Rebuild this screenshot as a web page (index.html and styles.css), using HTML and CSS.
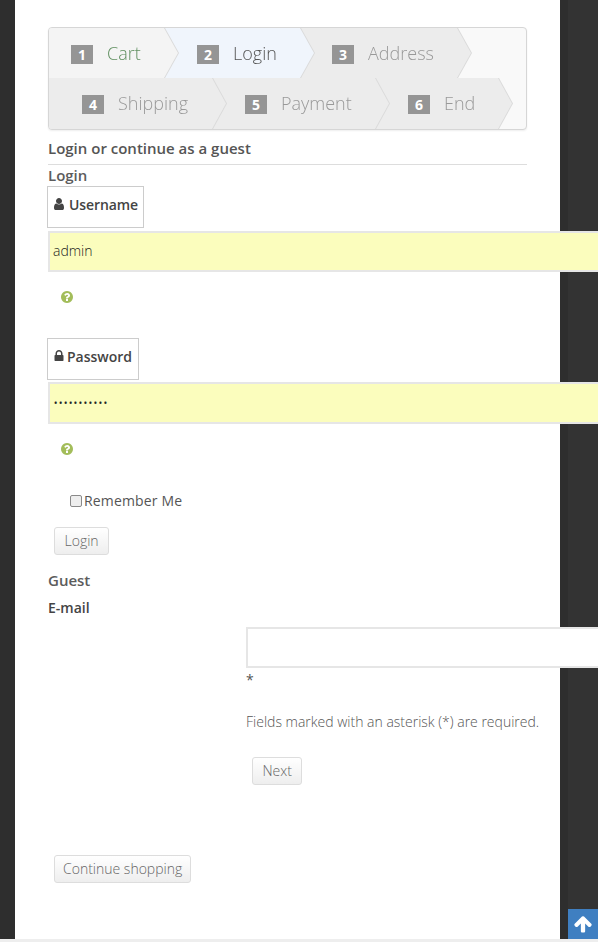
FILE: index.html
```html
<!DOCTYPE html>
<html>
<head>
<meta charset="UTF-8">
<title>Login</title>
<link rel="stylesheet" href="styles.css">
</head>
<body>
<div class="page">

<div class="steps">
<div class="row">
<div class="step s1"><span class="num">1</span><span class="name">Cart</span></div>
<div class="step s2"><span class="num">2</span><span class="name">Login</span></div>
<div class="step s3"><span class="num">3</span><span class="name">Address</span></div>
</div>
<div class="row">
<div class="step s4"><span class="num">4</span><span class="name">Shipping</span></div>
<div class="step s5"><span class="num">5</span><span class="name">Payment</span></div>
<div class="step s6"><span class="num">6</span><span class="name">End</span></div>
</div>
</div>

<h2 class="title">Login or continue as a guest</h2>
<h3 class="sub">Login</h3>

<div class="addon user-addon">
<svg class="ico" viewBox="0 0 1792 1792"><path d="M1536 1399q0 109-62.5 187t-150.5 78h-854q-88 0-150.5-78t-62.5-187q0-85 8.5-160.5t31.5-152 58.5-131 94-89 134.5-34.5q131 128 313 128t313-128q76 0 134.5 34.5t94 89 58.5 131 31.5 152 8.5 160.5zm-256-887q0 159-112.5 271.5t-271.5 112.5-271.5-112.5-112.5-271.5 112.5-271.5 271.5-112.5 271.5 112.5 112.5 271.5z"/></svg>
Username
</div>
<input class="field filled" type="text" value="admin">
<div class="help"><svg viewBox="0 0 1792 1792"><path d="M1024 1376v-192q0-14-9-23t-23-9h-192q-14 0-23 9t-9 23v192q0 14 9 23t23 9h192q14 0 23-9t9-23zm256-672q0-88-55.5-163t-138.5-116-170-41q-243 0-371 213-15 24 8 42l132 100q7 6 19 6 16 0 25-12 53-68 86-92 34-24 86-24 48 0 85.5 26t37.5 59q0 38-20 61t-68 45q-63 28-115.5 86.5t-52.5 125.5v36q0 14 9 23t23 9h192q14 0 23-9t9-23q0-19 21.5-49.5t54.5-49.5q32-18 49-28.5t46-35 44.5-48 28-60.5 12.5-81zm384 192q0 209-103 385.5t-279.5 279.5-385.5 103-385.5-103-279.5-279.5-103-385.5 103-385.5 279.5-279.5 385.5-103 385.5 103 279.5 279.5 103 385.5z"/></svg></div>

<div class="addon pass-addon">
<svg class="ico" viewBox="0 0 1792 1792"><path d="M640 768h512v-192q0-106-75-181t-181-75-181 75-75 181v192zm832 96v576q0 40-28 68t-68 28h-960q-40 0-68-28t-28-68v-576q0-40 28-68t68-28h32v-192q0-184 132-316t316-132 316 132 132 316v192h32q40 0 68 28t28 68z"/></svg>
Password
</div>
<input class="field filled pass-field" type="password" value="admin12345a">
<div class="help"><svg viewBox="0 0 1792 1792"><path d="M1024 1376v-192q0-14-9-23t-23-9h-192q-14 0-23 9t-9 23v192q0 14 9 23t23 9h192q14 0 23-9t9-23zm256-672q0-88-55.5-163t-138.5-116-170-41q-243 0-371 213-15 24 8 42l132 100q7 6 19 6 16 0 25-12 53-68 86-92 34-24 86-24 48 0 85.5 26t37.5 59q0 38-20 61t-68 45q-63 28-115.5 86.5t-52.5 125.5v36q0 14 9 23t23 9h192q14 0 23-9t9-23q0-19 21.5-49.5t54.5-49.5q32-18 49-28.5t46-35 44.5-48 28-60.5 12.5-81zm384 192q0 209-103 385.5t-279.5 279.5-385.5 103-385.5-103-279.5-279.5-103-385.5 103-385.5 279.5-279.5 385.5-103 385.5 103 279.5 279.5 103 385.5z"/></svg></div>

<label class="remember"><span class="box"></span>Remember Me</label>
<button class="btn login-btn">Login</button>

<h3 class="sub guest">Guest</h3>
<div class="email-label">E-mail</div>

<div class="guest-form">
<input class="field plain" type="text">
<div class="star">*</div>
<p class="req">Fields marked with an asterisk (*) are required.</p>
<button class="btn next-btn">Next</button>
</div>

<button class="btn cont-btn">Continue shopping</button>

</div>

<a class="totop"><svg viewBox="0 0 1792 1792"><path d="M1675 971q0 51-37 90l-75 75q-38 38-91 38-54 0-90-38l-294-293v704q0 52-37.5 84.5t-90.5 32.5h-128q-53 0-90.5-32.5t-37.5-84.5v-704l-294 293q-36 38-90 38t-90-38l-75-75q-38-38-38-90 0-53 38-91l651-651q35-37 90-37 54 0 91 37l651 651q37 39 37 91z"/></svg></a>
<div class="bottom"></div>
</body>
</html>
```

FILE: styles.css
```css
*{
box-sizing: border-box;
margin:0; padding:0;
}

html,body{
height: 100%;
overflow: hidden;
}

body{
background: #333;
font: 14px "Open Sans", sans-serif;
color: #555;
}

.page{
width: 560px;
height: 939px;
background: #fff;
border-left: 15px solid #2e2e2e;
padding: 27px 0 0 33px;
box-shadow: 8px 0 0 #2e2e2e;
}

/* steps */
.steps{
width: 479px;
height: 103px;
background: #f9f9f9;
border: 1px solid #d6d6d6;
border-radius: 4px;
overflow: hidden;
box-shadow: 0 1px 2px #eee;
}

.row{
display: flex;
height: 50px;
}

.row + .row{
height: 51px;
}

.step{
position: relative;
height: 100%;
display: flex;
align-items: center;
filter: drop-shadow(1px 0 0 #d9d9d9);
margin-right: -14px;
font-weight: 300;
font-size: 18px;
color: #999;
}

.row + .row .step{
padding-bottom: 1px;
}

.step::before{
content: "";
position: absolute;
inset: 0;
background: #ececec;
clip-path: polygon(0 0, calc(100% - 14px) 0, 100% 50%, calc(100% - 14px) 100%, 0 100%);
}

.step>span{
position: relative;
}

.s1{ width: 129px; z-index: 6; padding-left: 22px; }
.s2{ width: 150px; z-index: 5; padding-left: 33px; }
.s3{ width: 171px; z-index: 4; padding-left: 32px; }
.s4{ width: 177px; z-index: 3; padding-left: 33px; }
.s5{ width: 177px; z-index: 2; padding-left: 33px; }
.s6{ width: 137px; z-index: 1; padding-left: 33px; }

.s1::before{ background: #f4f4f4; }
.s2::before{ background: #f0f5fc; }

.s1 .name{ color: #5f8f5f; }
.s2 .name{ color: #555; }

.num{
width: 22px;
height: 19px;
margin-right: 14px;
background: #959595;
color: #fff;
font-size: 14px;
font-weight: 700;
text-align: center;
line-height: 19px;
margin-top: 3px;
}

/* headings */
.title{
font-size: 15px;
font-weight: 600;
color: #555;
width: 479px;
height: 35px;
line-height: 36px;
border-bottom: 1px solid #ddd;
}

.sub{
font-size: 15px;
font-weight: 600;
line-height: 21px;
color: #5c5c5c;
}

/* login form */
.addon{
display: flex;
align-items: center;
width: 97px;
height: 42px;
margin-left: -1px;
padding: 0 0 6px 4px;
border: 1px solid #ccc;
font-weight: 600;
letter-spacing: -.1px;
color: #444;
white-space: nowrap;
}

.pass-addon{
width: 92px;
letter-spacing: 0;
}

.ico{
width: 14px;
height: 14px;
fill: #444;
margin-right: 3px;
flex: none;
}

.pass-addon .ico{
margin-right: 1px;
}

.field{
display: block;
width: 600px;
height: 41px;
margin-top: 3px;
padding: 0 0 2px 3px;
border: 2px solid #e6e6e6;
font: 300 14px "Open Sans", sans-serif;
color: #222;
outline: none;
}

.filled{
background: #fbfdbd;
}

.pass-field{
margin-top: 2px;
height: 42px;
letter-spacing: -.3px;
}

.help{
height: 66px;
padding: 18px 0 0 12px;
}

.help svg{
display: block;
width: 14px;
height: 14px;
fill: #a3bd5a;
}

.remember{
display: flex;
align-items: center;
height: 20px;
margin-left: 22px;
padding-top: 1px;
letter-spacing: .15px;
}

.box{
width: 12px;
height: 12px;
margin-right: 2px;
background: #eee;
border: 1px solid #8a8a8a;
border-radius: 2px;
}

/* buttons */
.btn{
display: block;
height: 28px;
padding: 0 9.5px 2px;
background: linear-gradient(#fff, #eee);
border: 1px solid #ddd;
border-radius: 3px;
font: 300 14px "Open Sans", sans-serif;
color: #666;
}

.login-btn{
margin: 17px 0 0 6px;
}

.guest{
margin-top: 14px;
line-height: 22px;
}

.email-label{
margin-top: 6px;
font-weight: 600;
line-height: 22px;
color: #444;
}

/* guest form */
.guest-form{
margin: 8px 0 0 198px;
}

.guest-form .field{
margin-top: 0;
}

.star{
height: 20px;
margin-top: 2px;
line-height: 20px;
}

.req{
margin-top: 22px;
line-height: 20px;
white-space: nowrap;
font-weight: 300;
}

.next-btn{
margin: 25px 0 0 6px;
}

.cont-btn{
margin: 70px 0 0 6px;
padding: 0 8px 2px;
}

/* bottom bits */
.totop{
position: fixed;
right: 0;
bottom: 3px;
width: 30px;
height: 30px;
background: #3f7fc1;
display: flex;
align-items: center;
justify-content: center;
}

.totop svg{
width: 20px;
height: 20px;
fill: #fff;
}

.bottom{
position: fixed;
left: 0; right: 0; bottom: 0;
height: 3px;
background: #eee;
}
```
